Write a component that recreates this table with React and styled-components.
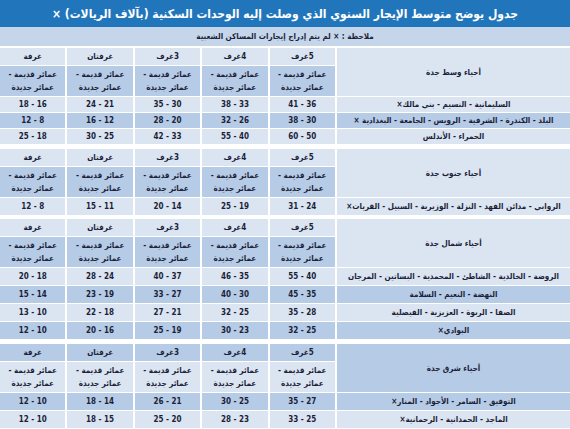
import React from 'react';
import styled, { createGlobalStyle } from 'styled-components';

const GlobalStyle = createGlobalStyle`
  html, body {
    margin: 0;
    padding: 0;
    background: #ffffff;
  }
  body {
    font-family: "DejaVu Sans Condensed", "DejaVu Sans", sans-serif;
    font-stretch: condensed;
    color: #1b1f3a;
  }
`;

const LIGHT = '#dbe5f1';
const DARK = '#b6cbe5';

const Page = styled.div`
  width: 570px;
  height: 429px;
  overflow: hidden;
  display: flex;
  flex-direction: column;

  & > * {
    flex-shrink: 0;
  }
`;

const Title = styled.div`
  height: 27px;
  background: #2176bb;
  color: #ffffff;
  font-size: 12px;
  font-weight: bold;
  display: flex;
  align-items: center;
  justify-content: center;
`;

const Note = styled.div`
  height: 19px;
  background: #c6d6ea;
  font-size: 8px;
  font-weight: bold;
  display: flex;
  align-items: center;
  justify-content: center;
  margin-bottom: 2px;
`;

const Section = styled.div`
  display: grid;
  grid-template-columns: 233px repeat(5, 1fr);
  grid-template-rows: 17px 30px;
  grid-auto-rows: ${(p) => p.$rowHeight}px;
  column-gap: 2px;
  row-gap: 1px;
  margin-bottom: ${(p) => p.$gap}px;
`;

const Cell = styled.div`
  background: ${(p) => (p.$dark ? DARK : LIGHT)};
  font-size: 8px;
  font-weight: bold;
  display: flex;
  align-items: center;
  justify-content: center;
  text-align: center;
  line-height: 13px;
  white-space: nowrap;
  overflow: hidden;
`;

const AreaHead = styled(Cell)`
  grid-row: span 2;
`;

const Value = styled.span`
  direction: ltr;
  unicode-bidi: isolate;
`;

const roomLabels = ['5غرف', '4غرف', '3غرف', 'غرفتان', 'غرفة'];

const sections = [
  {
    name: 'أحياء وسط جدة',
    flip: false,
    rowHeight: 15,
    gap: 5,
    rows: [
      ['السليمانية - النسيم - بني مالك×', '41 - 36', '38 - 33', '35 - 30', '24 - 21', '18 - 16'],
      ['البلد - الكندرة - الشرفية - الرويس - الجامعة - البغدادية ×', '38 - 30', '32 - 26', '28 - 20', '16 - 12', '12 - 8'],
      ['الحمراء - الأندلس', '60 - 50', '55 - 40', '42 - 33', '30 - 25', '25 - 18'],
    ],
  },
  {
    name: 'أحياء جنوب جدة',
    flip: false,
    rowHeight: 17,
    gap: 4,
    rows: [
      ['الروابي - مدائن الفهد - النزلة - الوزيرية - السبيل - القريات×', '31 - 24', '25 - 19', '20 - 14', '15 - 11', '12 - 8'],
    ],
  },
  {
    name: 'أحياء شمال جدة',
    flip: false,
    rowHeight: 17,
    gap: 5,
    rows: [
      ['الروضة - الخالدية - الشاطئ - المحمدية - البساتين - المرجان', '55 - 40', '46 - 35', '40 - 37', '28 - 24', '20 - 18'],
      ['النهضة - النعيم - السلامة', '45 - 35', '40 - 30', '33 - 27', '23 - 19', '15 - 14'],
      ['الصفا - الربوة - العزيزية - الفيصلية', '35 - 28', '32 - 25', '27 - 21', '22 - 18', '13 - 10'],
      ['البوادي×', '32 - 25', '30 - 23', '25 - 19', '20 - 16', '12 - 10'],
    ],
  },
  {
    name: 'أحياء شرق جدة',
    flip: true,
    rowHeight: 17,
    gap: 0,
    rows: [
      ['التوفيق - السامر - الأجواد - المنار×', '35 - 27', '30 - 25', '26 - 21', '18 - 14', '12 - 10'],
      ['الماجد - الحمدانية - الرحمانية×', '33 - 25', '28 - 23', '25 - 20', '18 - 15', '12 - 10'],
    ],
  },
];

const RentSection = ({ section }) => {
  const { name, flip, rows, rowHeight, gap } = section;
  return (
    <Section $rowHeight={rowHeight} $gap={gap}>
      <AreaHead $dark={flip}>{name}</AreaHead>
      {roomLabels.map((label) => (
        <Cell key={label} $dark={flip}>
          {label}
        </Cell>
      ))}
      {roomLabels.map((label) => (
        <Cell key={'sub' + label} $dark={!flip}>
          عمائر قديمة -
          <br />
          عمائر جديدة
        </Cell>
      ))}
      {rows.map((row, i) => {
        const dark = flip ? i % 2 === 0 : i % 2 === 1;
        return (
          <React.Fragment key={row[0]}>
            <Cell $dark={dark}>{row[0]}</Cell>
            {row.slice(1).map((v, j) => (
              <Cell key={j} $dark={dark}>
                <Value>{v}</Value>
              </Cell>
            ))}
          </React.Fragment>
        );
      })}
    </Section>
  );
};

const App = () => {
  return (
    <>
      <GlobalStyle />
      <Page dir="rtl">
        <Title>جدول يوضح متوسط الإيجار السنوي الذي وصلت إليه الوحدات السكنية (بآلاف الريالات) ×</Title>
        <Note>ملاحظة : × لم يتم إدراج إيجارات المساكن الشعبية</Note>
        {sections.map((s) => (
          <RentSection key={s.name} section={s} />
        ))}
      </Page>
    </>
  );
};

export default App;
